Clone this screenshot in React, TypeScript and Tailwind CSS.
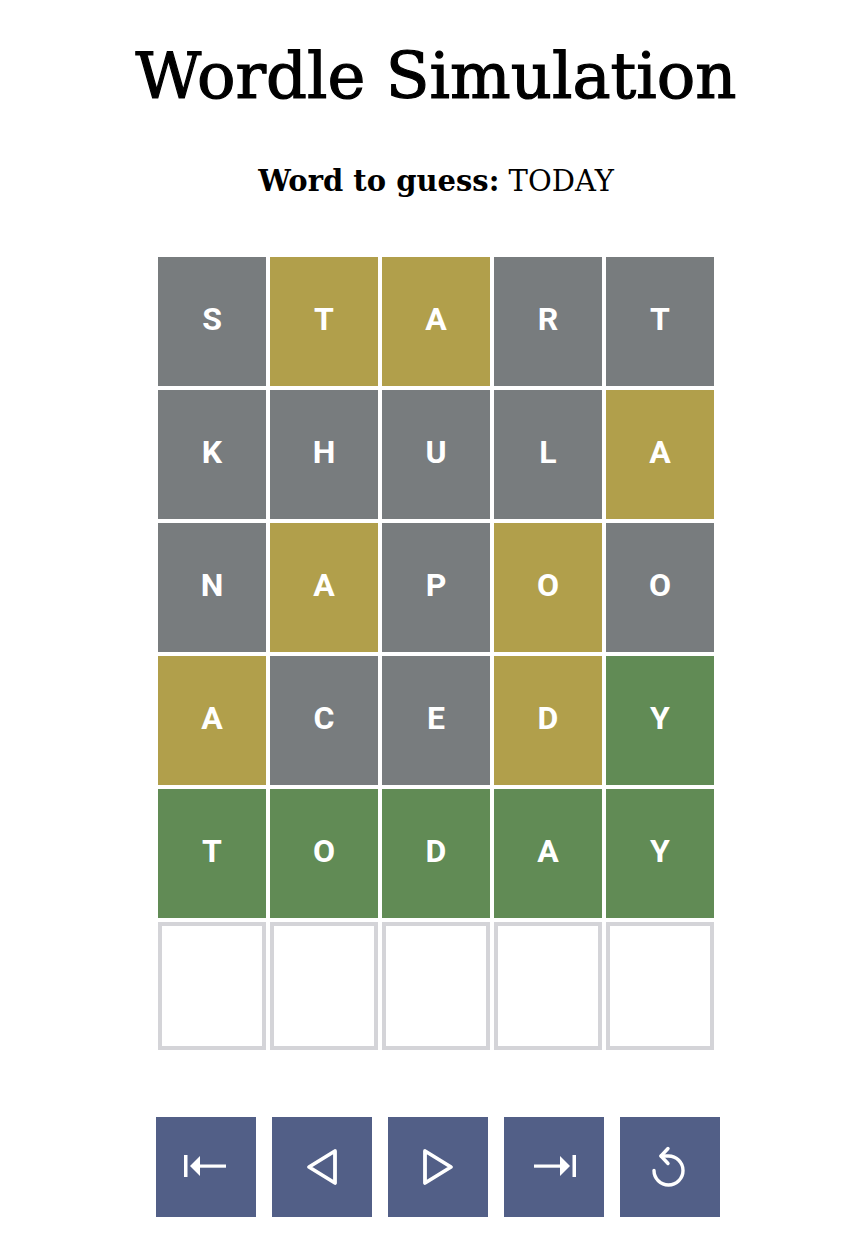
import React from "react";

type Tile = { letter: string; state: "gray" | "yellow" | "green" | "empty" };

const rows: string[][] = [
  ["S", "T", "A", "R", "T"],
  ["K", "H", "U", "L", "A"],
  ["N", "A", "P", "O", "O"],
  ["A", "C", "E", "D", "Y"],
  ["T", "O", "D", "A", "Y"],
];

const states: Tile["state"][][] = [
  ["gray", "yellow", "yellow", "gray", "gray"],
  ["gray", "gray", "gray", "gray", "yellow"],
  ["gray", "yellow", "gray", "yellow", "gray"],
  ["yellow", "gray", "gray", "yellow", "green"],
  ["green", "green", "green", "green", "green"],
];

const tileBg: Record<string, string> = {
  gray: "bg-[#787c7e]",
  yellow: "bg-[#b19f4b]",
  green: "bg-[#618b55]",
};

function Cell({ tile }: { tile: Tile }) {
  if (tile.state === "empty") {
    return <div className="h-[128px] border-4 border-[#d4d4d8] bg-white" />;
  }
  return (
    <div
      className={`flex h-[129px] items-center justify-center pb-[6px] ${tileBg[tile.state]} font-['Roboto',sans-serif] text-[32px] font-bold text-white`}
    >
      {tile.letter}
    </div>
  );
}

function FirstIcon() {
  return (
    <svg width="44" height="26" viewBox="0 0 44 26" fill="white">
      <rect x="0" y="1" width="3.5" height="22" />
      <polygon points="6,12 16,2 16,22" />
      <rect x="14" y="10.5" width="28" height="3.2" />
    </svg>
  );
}

function LastIcon() {
  return (
    <svg width="44" height="26" viewBox="0 0 44 26" fill="white" className="scale-x-[-1]">
      <rect x="0" y="1" width="3.5" height="22" />
      <polygon points="6,12 16,2 16,22" />
      <rect x="14" y="10.5" width="28" height="3.2" />
    </svg>
  );
}

function TriangleIcon({ flip }: { flip?: boolean }) {
  return (
    <svg
      width="36"
      height="40"
      viewBox="0 0 36 40"
      fill="none"
      stroke="white"
      strokeWidth="3.8"
      strokeLinejoin="round"
      strokeLinecap="round"
      className={flip ? "scale-x-[-1]" : ""}
    >
      <path d="M31 4 L5 20 L31 36 Z" />
    </svg>
  );
}

function ReplayIcon() {
  return (
    <svg
      width="40"
      height="48"
      viewBox="0 0 40 48"
      fill="none"
      stroke="white"
      strokeWidth="3.4"
      strokeLinejoin="round"
      strokeLinecap="round"
    >
      <path d="M11 13 H18.5 A14.5 14.5 0 1 1 4 27.5" />
      <path d="M18 5.5 L11 13 L18 20.5" />
    </svg>
  );
}

export default function App() {
  const grid: Tile[][] = [
    ...rows.map((r, i) => r.map((letter, j) => ({ letter, state: states[i][j] }))),
    Array.from({ length: 5 }, () => ({ letter: "", state: "empty" as const })),
  ];

  return (
    <div className="flex min-h-screen flex-col items-center bg-white pl-[20px] text-black">
      <h1 className="mt-[44px] font-['DejaVu_Serif',serif] text-[64px] leading-none [-webkit-text-stroke:1.2px_black]">
        Wordle Simulation
      </h1>

      <p className="mt-[59px] font-['DejaVu_Serif',serif] text-[29px] leading-none">
        <span className="font-bold">Word to guess:</span> TODAY
      </p>

      {/* board */}
      <div className="mt-[61px] grid grid-cols-[repeat(5,108px)] gap-x-1 gap-y-1">
        {grid.map((row, i) =>
          row.map((tile, j) => <Cell key={`${i}-${j}`} tile={tile} />)
        )}
      </div>

      {/* playback controls */}
      <div className="ml-[4px] mt-[67px] flex gap-4">
        <button className="flex h-[100px] w-[100px] items-center justify-center bg-[#525f87]">
          <FirstIcon />
        </button>
        <button className="flex h-[100px] w-[100px] items-center justify-center bg-[#525f87]">
          <TriangleIcon />
        </button>
        <button className="flex h-[100px] w-[100px] items-center justify-center bg-[#525f87]">
          <TriangleIcon flip />
        </button>
        <button className="flex h-[100px] w-[100px] items-center justify-center bg-[#525f87]">
          <LastIcon />
        </button>
        <button className="flex h-[100px] w-[100px] items-center justify-center bg-[#525f87]">
          <ReplayIcon />
        </button>
      </div>
    </div>
  );
}
